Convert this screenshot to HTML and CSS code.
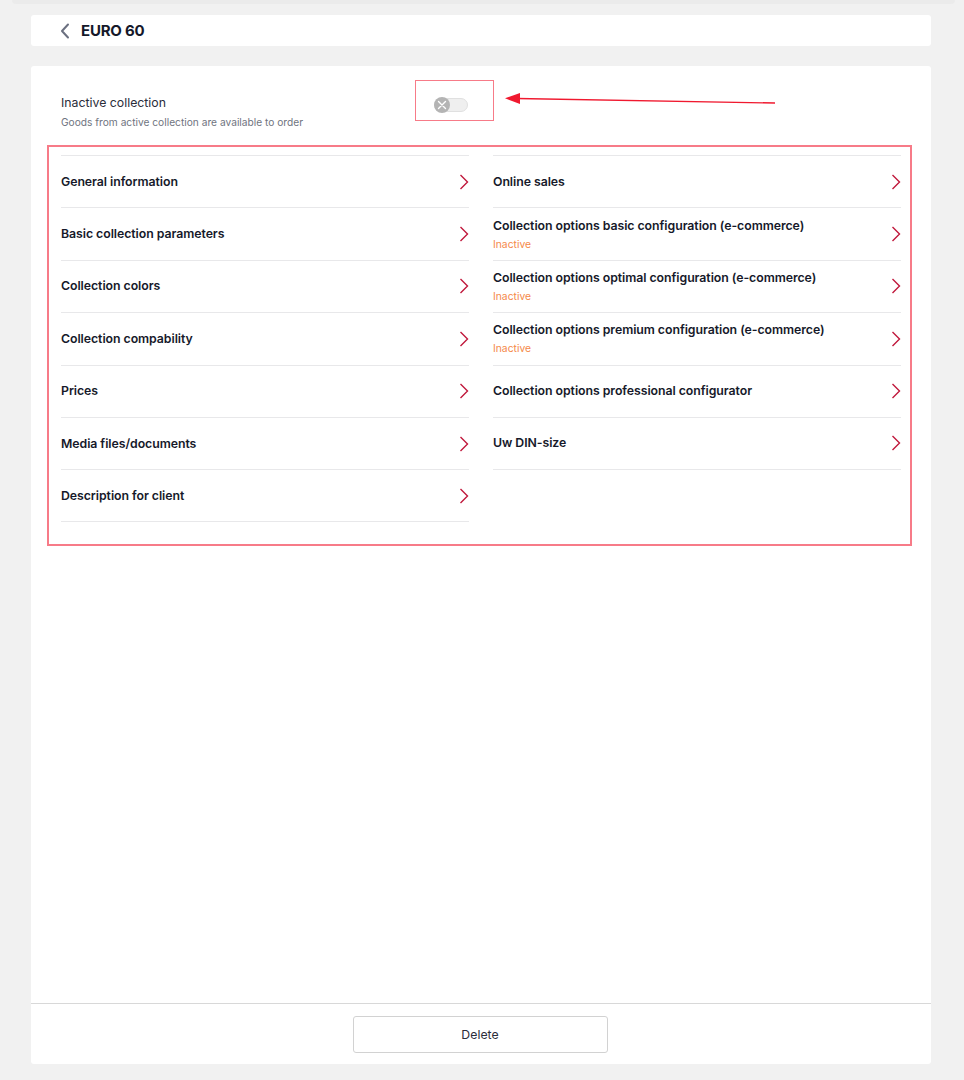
FILE: index.html
```html
<!DOCTYPE html>
<html>
<head>
<meta charset="utf-8">
<link rel="stylesheet" href="styles.css">
</head>
<body>
<div class="top-shadow"></div>
<div class="page">
  <div class="topbar">
    <svg class="back" width="10" height="16" viewBox="0 0 10 16"><path d="M8 1.5 L2 8 L8 14.5" fill="none" stroke="#6b7080" stroke-width="2" stroke-linecap="round" stroke-linejoin="round"/></svg>
    <span class="title">EURO 60</span>
  </div>
  <div class="card">
    <div class="content">
      <div class="setting">
        <div class="setting-text">
          <div class="setting-title">Inactive collection</div>
          <div class="setting-sub">Goods from active collection are available to order</div>
        </div>
        <div class="toggle">
          <span class="knob">
            <svg width="10" height="10" viewBox="0 0 10 10"><path d="M1.5 1.5 L8.5 8.5 M8.5 1.5 L1.5 8.5" stroke="#fff" stroke-width="1.4" stroke-linecap="round"/></svg>
          </span>
        </div>
      </div>
      <div class="lists">
        <div class="list">
          <div class="row"><div class="row-text"><div class="row-title">General information</div></div><svg class="chev" viewBox="0 0 10 16"><path d="M1.5 1 L8.5 8 L1.5 15" fill="none" stroke="#c0183c" stroke-width="1.4"/></svg></div>
          <div class="row"><div class="row-text"><div class="row-title">Basic collection parameters</div></div><svg class="chev" viewBox="0 0 10 16"><path d="M1.5 1 L8.5 8 L1.5 15" fill="none" stroke="#c0183c" stroke-width="1.4"/></svg></div>
          <div class="row"><div class="row-text"><div class="row-title">Collection colors</div></div><svg class="chev" viewBox="0 0 10 16"><path d="M1.5 1 L8.5 8 L1.5 15" fill="none" stroke="#c0183c" stroke-width="1.4"/></svg></div>
          <div class="row"><div class="row-text"><div class="row-title">Collection compability</div></div><svg class="chev" viewBox="0 0 10 16"><path d="M1.5 1 L8.5 8 L1.5 15" fill="none" stroke="#c0183c" stroke-width="1.4"/></svg></div>
          <div class="row"><div class="row-text"><div class="row-title">Prices</div></div><svg class="chev" viewBox="0 0 10 16"><path d="M1.5 1 L8.5 8 L1.5 15" fill="none" stroke="#c0183c" stroke-width="1.4"/></svg></div>
          <div class="row"><div class="row-text"><div class="row-title">Media files/documents</div></div><svg class="chev" viewBox="0 0 10 16"><path d="M1.5 1 L8.5 8 L1.5 15" fill="none" stroke="#c0183c" stroke-width="1.4"/></svg></div>
          <div class="row"><div class="row-text"><div class="row-title">Description for client</div></div><svg class="chev" viewBox="0 0 10 16"><path d="M1.5 1 L8.5 8 L1.5 15" fill="none" stroke="#c0183c" stroke-width="1.4"/></svg></div>
        </div>
        <div class="list">
          <div class="row"><div class="row-text"><div class="row-title">Online sales</div></div><svg class="chev" viewBox="0 0 10 16"><path d="M1.5 1 L8.5 8 L1.5 15" fill="none" stroke="#c0183c" stroke-width="1.4"/></svg></div>
          <div class="row"><div class="row-text"><div class="row-title">Collection options basic configuration (e-commerce)</div><div class="row-status">Inactive</div></div><svg class="chev" viewBox="0 0 10 16"><path d="M1.5 1 L8.5 8 L1.5 15" fill="none" stroke="#c0183c" stroke-width="1.4"/></svg></div>
          <div class="row"><div class="row-text"><div class="row-title">Collection options optimal configuration (e-commerce)</div><div class="row-status">Inactive</div></div><svg class="chev" viewBox="0 0 10 16"><path d="M1.5 1 L8.5 8 L1.5 15" fill="none" stroke="#c0183c" stroke-width="1.4"/></svg></div>
          <div class="row"><div class="row-text"><div class="row-title">Collection options premium configuration (e-commerce)</div><div class="row-status">Inactive</div></div><svg class="chev" viewBox="0 0 10 16"><path d="M1.5 1 L8.5 8 L1.5 15" fill="none" stroke="#c0183c" stroke-width="1.4"/></svg></div>
          <div class="row"><div class="row-text"><div class="row-title">Collection options professional configurator</div></div><svg class="chev" viewBox="0 0 10 16"><path d="M1.5 1 L8.5 8 L1.5 15" fill="none" stroke="#c0183c" stroke-width="1.4"/></svg></div>
          <div class="row"><div class="row-text"><div class="row-title">Uw DIN-size</div></div><svg class="chev" viewBox="0 0 10 16"><path d="M1.5 1 L8.5 8 L1.5 15" fill="none" stroke="#c0183c" stroke-width="1.4"/></svg></div>
        </div>
      </div>
    </div>
    <div class="footer">
      <button class="btn">Delete</button>
    </div>
    <div class="mark mark-toggle"></div>
    <div class="mark mark-list"></div>
    <svg class="arrow" width="290" height="14" viewBox="0 0 290 14">
      <line x1="12" y1="5.5" x2="270" y2="10" stroke="#f0192f" stroke-width="1.3"/>
      <polygon points="0,5.3 15,0 15,11" fill="#f0192f"/>
    </svg>
  </div>
</div>
</body>
</html>
```
FILE: styles.css
```css
* { box-sizing: border-box; }
html, body { margin: 0; padding: 0; }
body {
  background: #f1f1f1;
  font-family: "Inter", "Liberation Sans", sans-serif;
  color: #1b1d2a;
  position: relative;
  width: 964px;
  height: 1080px;
  overflow: hidden;
}
.top-shadow {
  position: absolute;
  left: 12px;
  top: 0;
  width: 943px;
  height: 4px;
  background: #ebebeb;
  border-radius: 0 0 4px 4px;
}
.page {
  padding: 15px 33px 16px 31px;
  display: flex;
  flex-direction: column;
  gap: 20px;
}
.topbar {
  height: 31px;
  background: #fff;
  border-radius: 3px;
  display: flex;
  align-items: center;
  padding-left: 29px;
  gap: 11px;
}
.back { display: block; }
.title {
  font-size: 15px;
  font-weight: 700;
  color: #15182a;
  letter-spacing: -0.2px;
}
.card {
  position: relative;
  background: #fff;
  border-radius: 3px;
  height: 998px;
  display: flex;
  flex-direction: column;
}
.content {
  flex: 1;
  padding: 26px 30px 0 30px;
}
.setting {
  display: flex;
  align-items: center;
  height: 40px;
}
.setting-text { width: 373px; }
.setting-title {
  font-size: 12.3px;
  line-height: 18px;
  color: #2a2d3a;
}
.setting-sub {
  font-size: 10.2px;
  line-height: 16px;
  color: #6f7480;
  margin-top: 2px;
}
.toggle {
  position: relative;
  width: 34px;
  height: 14px;
  border-radius: 7px;
  background: #efefef;
  border: 1px solid #e0e0e0;
  margin-top: -14px;
}
.knob {
  position: absolute;
  left: -1px;
  top: -2px;
  width: 16px;
  height: 16px;
  border-radius: 50%;
  background: #b4b4b4;
  display: flex;
  align-items: center;
  justify-content: center;
}
.knob svg { display: block; }
.lists {
  margin-top: 23px;
  display: grid;
  grid-template-columns: 408px 408px;
  column-gap: 24px;
  align-items: start;
}
.list {
  display: flex;
  flex-direction: column;
}
.row {
  height: 52.4px;
  border-top: 1px solid #e8e8ea;
  display: flex;
  align-items: center;
  justify-content: space-between;
}
.list .row:last-child { border-bottom: 1px solid #e8e8ea; height: 53px; }
.row-title {
  font-size: 12.3px;
  font-weight: 600;
  line-height: 16px;
  color: #16192a;
  letter-spacing: -0.05px;
}
.row-status {
  font-size: 10.3px;
  line-height: 14px;
  margin-top: 3px;
  color: #f5894a;
}
.chev {
  width: 10px;
  height: 16px;
  display: block;
  flex: none;
}
.footer {
  height: 61px;
  border-top: 1px solid #d8d8d8;
  display: flex;
  justify-content: center;
  padding-top: 12px;
}
.btn {
  width: 255px;
  height: 37px;
  background: #fff;
  border: 1px solid #d2d2d2;
  border-radius: 3px;
  font-family: "Inter", "Liberation Sans", sans-serif;
  font-size: 12.3px;
  color: #2a2d3a;
  margin-left: -2px;
}
.mark {
  position: absolute;
  border: 1.5px solid #f77b88;
}
.mark-toggle {
  left: 384px;
  top: 14px;
  width: 79px;
  height: 41px;
}
.mark-list {
  left: 16px;
  top: 79px;
  width: 865px;
  height: 401px;
  border-width: 2px;
}
.arrow {
  position: absolute;
  left: 474px;
  top: 27px;
}
```
